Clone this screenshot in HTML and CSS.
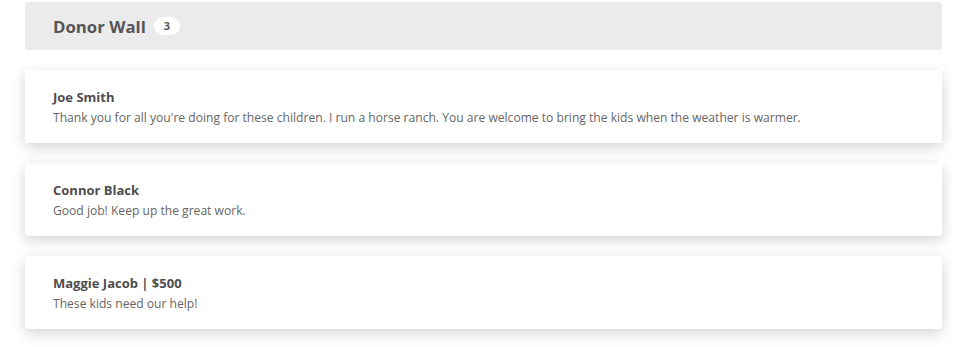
FILE: index.html
```html
<!DOCTYPE html>
<html lang="en">
<head>
  <meta charset="UTF-8"/>
  <title>Donor Wall</title>
  <link rel="stylesheet" href="styles.css">
</head>
<body>
  <div class="wall">
    <header class="wall-header">
      <h1>Donor Wall</h1>
      <span class="count">3</span>
    </header>

    <div class="donor-list">
      <div class="donor">
        <div class="donor-name">Joe Smith</div>
        <p>Thank you for all you're doing for these children. I run a horse ranch. You are welcome to bring the kids when the weather is warmer.</p>
      </div>
      <div class="donor">
        <div class="donor-name">Connor Black</div>
        <p>Good job! Keep up the great work.</p>
      </div>
      <div class="donor">
        <div class="donor-name">Maggie Jacob | $500</div>
        <p>These kids need our help!</p>
      </div>
    </div>
  </div>
</body>
</html>
```

FILE: styles.css
```css
* { margin:0; padding:0; box-sizing:border-box; }
body { font-family:'Open Sans',sans-serif; background:#fff; color:#555; }
.wall { padding:2px 25px 19px; }
.wall-header {
  background:#ebebeb; border-radius:3px; height:48px;
  display:flex; align-items:center; gap:8px; padding:0 28px;
}
.wall-header h1 { font-size:16.8px; font-weight:700; color:#555; }
.count {
  background:#fff; border-radius:9px; font-size:11px; font-weight:700;
  width:26px; height:18px; line-height:18px; text-align:center; color:#555;
}
.donor-list { display:flex; flex-direction:column; gap:20px; margin-top:20px; }
.donor {
  background:#fff; border-radius:3px; padding:18px 28px 17px;
  box-shadow:0 4px 14px rgba(0,0,0,0.18);
}
.donor-name { font-size:13px; font-weight:700; line-height:18px; color:#4d4d4d; }
.donor p { font-size:12.1px; line-height:17px; margin-top:3px; color:#666; }
```
